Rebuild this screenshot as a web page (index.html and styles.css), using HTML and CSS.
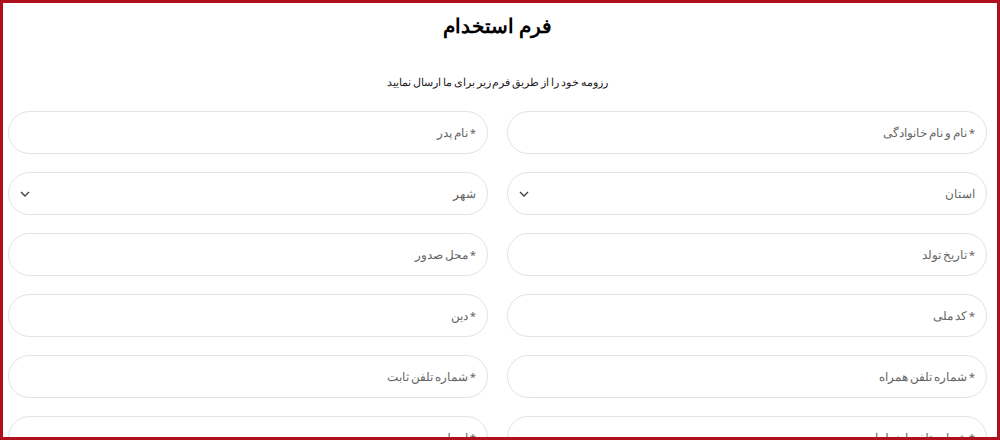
FILE: index.html
```html
<!DOCTYPE html>
<html lang="fa" dir="rtl">
<head>
    <meta charset="UTF-8">
    <meta name="viewport" content="width=device-width, initial-scale=1.0">
    <title>فرم استخدام</title>
    <link rel="stylesheet" href="styles.css">
</head>
<body>
    <div class="page">
        <h1 class="title">فرم استخدام</h1>
        <p class="subtitle">رزومه خود را از طریق فرم زیر برای ما ارسال نمایید</p>

        <form class="form-grid">
            <input type="text" class="field" placeholder="* نام و نام خانوادگی">
            <input type="text" class="field" placeholder="* نام پدر">

            <div class="select-wrap">
                <select class="field select">
                    <option>استان</option>
                </select>
                <svg class="chevron" width="10" height="6" viewBox="0 0 10 6">
                    <path d="M1 1l4 4 4-4" fill="none" stroke="#444" stroke-width="1.4"/>
                </svg>
            </div>
            <div class="select-wrap">
                <select class="field select">
                    <option>شهر</option>
                </select>
                <svg class="chevron" width="10" height="6" viewBox="0 0 10 6">
                    <path d="M1 1l4 4 4-4" fill="none" stroke="#444" stroke-width="1.4"/>
                </svg>
            </div>

            <input type="text" class="field" placeholder="* تاریخ تولد">
            <input type="text" class="field" placeholder="* محل صدور">

            <input type="text" class="field" placeholder="* کد ملی">
            <input type="text" class="field" placeholder="* دین">

            <input type="text" class="field" placeholder="* شماره تلفن همراه">
            <input type="text" class="field" placeholder="* شماره تلفن ثابت">

            <input type="text" class="field" placeholder="* شماره تلفن اضطراری">
            <input type="text" class="field" placeholder="* ایمیل">
        </form>
    </div>
</body>
</html>
```

FILE: styles.css
```css
* {
    margin: 0;
    padding: 0;
    box-sizing: border-box;
}

html, body {
    height: 100%;
}

body {
    font-family: "Noto Sans", sans-serif;
    background: white;
    border: 3px solid #b00f1d;
    overflow: hidden;
}

.page {
    padding: 0 10px 0 5px;
}

.title {
    text-align: center;
    font-size: 20px;
    font-weight: bold;
    color: #000;
    line-height: 30px;
    padding-top: 8px;
}

.subtitle {
    text-align: center;
    font-size: 11px;
    word-spacing: -1px;
    color: #222;
    margin-top: 32px;
    line-height: 18px;
}

.form-grid {
    display: grid;
    grid-template-columns: 1fr 1fr;
    column-gap: 19px;
    row-gap: 18px;
    margin-top: 20px;
}

.field {
    width: 100%;
    height: 43px;
    border: 1px solid #e2e2e2;
    border-radius: 22px;
    padding: 0 11px;
    font-family: inherit;
    font-size: 11.5px;
    word-spacing: -1px;
    color: #666;
    background: white;
    outline: none;
}

.field::placeholder {
    color: #666;
}

.select-wrap {
    position: relative;
}

.select {
    appearance: none;
    -webkit-appearance: none;
}

.chevron {
    position: absolute;
    left: 12px;
    top: 19px;
    pointer-events: none;
}
```
